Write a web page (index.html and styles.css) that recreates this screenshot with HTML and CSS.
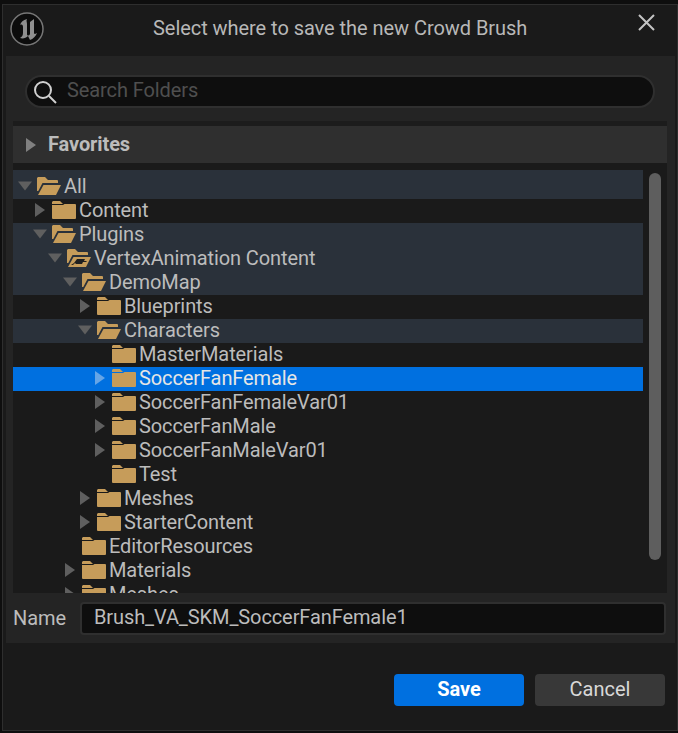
FILE: index.html
```html
<!DOCTYPE html>
<html lang="en">
<head>
  <meta charset="UTF-8">
  <meta name="viewport" content="width=device-width, initial-scale=1.0">
  <link rel="stylesheet" href="styles.css">
  <title>Select where to save the new Crowd Brush</title>
</head>
<body>
  <svg class="defs" width="0" height="0">
    <symbol id="closed" viewBox="0 0 24 18">
      <path d="M1 0h7l3 3H0V1z"/>
      <path d="M0 4h11l1.500-1H23a1 1 0 0 1 1 1v13a1 1 0 0 1-1 1H1a1 1 0 0 1-1-1z"/>
    </symbol>
    <symbol id="open" viewBox="0 0 24 18">
      <path d="M1 0h7l3 3h9a1 1 0 0 1 1 1v2H5.500L1.300 14H0V1z"/>
      <path d="M6.500 8H24l-5 10H1z"/>
    </symbol>
    <symbol id="plugin" viewBox="0 0 24 18">
      <path d="M1 0h7l3 3h9a1 1 0 0 1 1 1v2H5.500L1.300 14H0V1z"/>
      <path d="M6.500 8H24l-5 10H1z"/>
      <path class="plug" d="M4 16l3-2 3-4h8l-1 2h3l-1 1h-3l-1 2h-6l-1-1-2 2z"/>
    </symbol>
    <symbol id="right" viewBox="0 0 10 14"><path d="M0 0l10 7-10 7z"/></symbol>
    <symbol id="down" viewBox="0 0 14 9"><path d="M0 0h14L7 9z"/></symbol>
  </svg>

  <div class="window">
    <div class="titlebar">
      <svg class="logo" viewBox="0 0 34 34">
        <circle cx="17" cy="17" r="16" fill="#0c0c0c" stroke="#777" stroke-width="1.500"/>
        <path fill="#8f8f8f" d="M17 7C13 8 11 10 10 13c2-1 3 0 3 2v6c0 2-1 4-3 5 3 1 6 0 8-2l2 4c3-1 6-4 7-7l-2 1c-1 0-1-1-1-2V7l-4 3v12c-1 2-3 2-3 0V12c0-2-1-3 0-5z"/>
      </svg>
      <h1 class="title">Select where to save the new Crowd Brush</h1>
      <svg class="close" viewBox="0 0 17 17"><path d="M1 1l15 15M16 1L1 16"/></svg>
    </div>

    <div class="panel">
      <div class="search">
        <svg class="search-icon" viewBox="0 0 24 24"><circle cx="10" cy="10" r="8"/><path d="M16 16l7 7"/></svg>
        <span class="search-text">Search Folders</span>
      </div>

      <div class="favorites">
        <svg class="fav-arrow"><use href="#right"/></svg>
        <span class="fav-text">Favorites</span>
      </div>

      <div class="tree">
        <div class="row first hl lv0"><svg class="arrow"><use href="#down"/></svg><svg class="folder"><use href="#open"/></svg>All</div>
        <div class="row lv1"><svg class="arrow"><use href="#right"/></svg><svg class="folder"><use href="#closed"/></svg>Content</div>
        <div class="row hl lv1"><svg class="arrow"><use href="#down"/></svg><svg class="folder"><use href="#open"/></svg>Plugins</div>
        <div class="row hl lv2"><svg class="arrow"><use href="#down"/></svg><svg class="folder"><use href="#plugin"/></svg>VertexAnimation Content</div>
        <div class="row hl lv3"><svg class="arrow"><use href="#down"/></svg><svg class="folder"><use href="#open"/></svg>DemoMap</div>
        <div class="row lv4"><svg class="arrow"><use href="#right"/></svg><svg class="folder"><use href="#closed"/></svg>Blueprints</div>
        <div class="row hl lv4"><svg class="arrow"><use href="#down"/></svg><svg class="folder"><use href="#open"/></svg>Characters</div>
        <div class="row lv5"><span class="arrow"></span><svg class="folder"><use href="#closed"/></svg>MasterMaterials</div>
        <div class="row selected lv5"><svg class="arrow"><use href="#right"/></svg><svg class="folder"><use href="#closed"/></svg>SoccerFanFemale</div>
        <div class="row lv5"><svg class="arrow"><use href="#right"/></svg><svg class="folder"><use href="#closed"/></svg>SoccerFanFemaleVar01</div>
        <div class="row lv5"><svg class="arrow"><use href="#right"/></svg><svg class="folder"><use href="#closed"/></svg>SoccerFanMale</div>
        <div class="row lv5"><svg class="arrow"><use href="#right"/></svg><svg class="folder"><use href="#closed"/></svg>SoccerFanMaleVar01</div>
        <div class="row lv5"><span class="arrow"></span><svg class="folder"><use href="#closed"/></svg>Test</div>
        <div class="row lv4"><svg class="arrow"><use href="#right"/></svg><svg class="folder"><use href="#closed"/></svg>Meshes</div>
        <div class="row lv4"><svg class="arrow"><use href="#right"/></svg><svg class="folder"><use href="#closed"/></svg>StarterContent</div>
        <div class="row lv3"><span class="arrow"></span><svg class="folder"><use href="#closed"/></svg>EditorResources</div>
        <div class="row lv3"><svg class="arrow"><use href="#right"/></svg><svg class="folder"><use href="#closed"/></svg>Materials</div>
        <div class="row lv3"><svg class="arrow"><use href="#right"/></svg><svg class="folder"><use href="#closed"/></svg>Meshes</div>
        <div class="scrollbar"></div>
      </div>

      <div class="name-row">
        <span class="name-label">Name</span>
        <div class="name-input">Brush_VA_SKM_SoccerFanFemale1</div>
      </div>
    </div>

    <div class="buttons">
      <button class="btn btn-save">Save</button>
      <button class="btn btn-cancel">Cancel</button>
    </div>
  </div>
</body>
</html>
```

FILE: styles.css
```css
* {
  box-sizing: border-box;
}

html, body {
  margin: 0;
  height: 100%;
  background: #0e0e0e;
}

body {
  padding-top: 4px;
  font-family: Roboto, "Liberation Sans", sans-serif;
  letter-spacing: -0.1px;
  overflow: hidden;
}

.defs {
  position: absolute;
}

.window {
  height: 727px;
  margin-left: 2px;
  background: #1a1a1a;
  border: 1px solid #2e2e2e;
  display: flex;
  flex-direction: column;
}

.titlebar {
  height: 51px;
  padding: 7px 22px 0 7px;
  display: flex;
  align-items: flex-start;
  flex-shrink: 0;
}

.logo {
  width: 34px;
  height: 34px;
}

.title {
  margin: 1px 0 0 109px;
  font-size: 20px;
  font-weight: 400;
  line-height: 30px;
  letter-spacing: -0.05px;
  color: #b8b8b8;
  white-space: nowrap;
}

.close {
  width: 17px;
  height: 17px;
  margin: 2px 0 0 auto;
  fill: none;
  stroke: #c4c4c4;
  stroke-width: 2;
}

.panel {
  height: 587px;
  margin: 0 2px 0 3px;
  background: #242424;
  display: flex;
  flex-direction: column;
  flex-shrink: 0;
}

.search {
  height: 33px;
  margin: 19px 20px 0 19px;
  padding-left: 6px;
  background: #0e0e0e;
  border: 2px solid #2f2f2f;
  border-radius: 17px;
  display: flex;
  align-items: center;
  flex-shrink: 0;
}

.search-icon {
  width: 24px;
  height: 24px;
  fill: none;
  stroke: #d0d0d0;
  stroke-width: 2;
}

.search-text {
  margin: 0 0 3px 10px;
  font-size: 20px;
  color: #4f4f4f;
}

.favorites {
  height: 42px;
  margin: 13px 8px 0 7px;
  padding-left: 13px;
  background: #2f2f2f;
  border-top: 5px solid #1c1c1c;
  display: flex;
  align-items: center;
  font-size: 20px;
  font-weight: 700;
  color: #bcbcbc;
  flex-shrink: 0;
}

.fav-arrow {
  width: 10px;
  height: 16px;
  margin-right: 12px;
  fill: #808080;
}

.fav-text {
  margin-bottom: 2px;
}

.tree {
  position: relative;
  height: 430px;
  margin: 0 8px 0 7px;
  padding: 7px 24px 0 0;
  background: #1a1a1a;
  overflow: hidden;
  flex-shrink: 0;
}

.row {
  height: 24px;
  padding-bottom: 2px;
  display: flex;
  align-items: center;
  font-size: 20px;
  line-height: 22px;
  color: #bcbcbc;
  white-space: nowrap;
}

.row.first {
  height: 29px;
  padding-top: 4px;
}

.row.hl {
  background: #2a313a;
}

.row.selected {
  background: #0070e0;
  color: #e6e6e6;
}

.lv0 { padding-left: 5px; }
.lv1 { padding-left: 20px; }
.lv2 { padding-left: 35px; }
.lv3 { padding-left: 50px; }
.lv4 { padding-left: 65px; }
.lv5 { padding-left: 80px; }

.arrow {
  width: 14px;
  height: 14px;
  flex-shrink: 0;
  fill: #5f5f5f;
  margin-right: 5px;
}

.selected .arrow {
  fill: #66a5e6;
}

.folder {
  width: 24px;
  height: 18px;
  margin-right: 3px;
  flex-shrink: 0;
  fill: #c69c5a;
}

.plug {
  fill: #1f1f1f;
}

.scrollbar {
  position: absolute;
  top: 10px;
  right: 6px;
  width: 12px;
  height: 387px;
  background: #5e5e5e;
  border-radius: 6px;
}

.name-row {
  height: 50px;
  padding: 9px 9px 0 7px;
  display: flex;
  align-items: flex-start;
  flex-shrink: 0;
}

.name-label {
  width: 68px;
  font-size: 20px;
  line-height: 32px;
  color: #bcbcbc;
}

.name-input {
  flex: 1;
  height: 33px;
  margin-left: -1px;
  padding-left: 12px;
  background: #0e0e0e;
  border: 2px solid #2f2f2f;
  border-radius: 4px;
  font-size: 20px;
  line-height: 26px;
  color: #bcbcbc;
}

.buttons {
  margin-top: 31px;
  padding-right: 12px;
  display: flex;
  justify-content: flex-end;
  gap: 11px;
}

.btn {
  width: 130px;
  height: 32px;
  padding: 0 0 2px;
  border: none;
  border-radius: 4px;
  font-family: inherit;
  font-size: 20px;
  cursor: pointer;
}

.btn-save {
  background: #0070e0;
  color: #fff;
  font-weight: 700;
}

.btn-cancel {
  background: #383838;
  color: #d8d8d8;
}
```
